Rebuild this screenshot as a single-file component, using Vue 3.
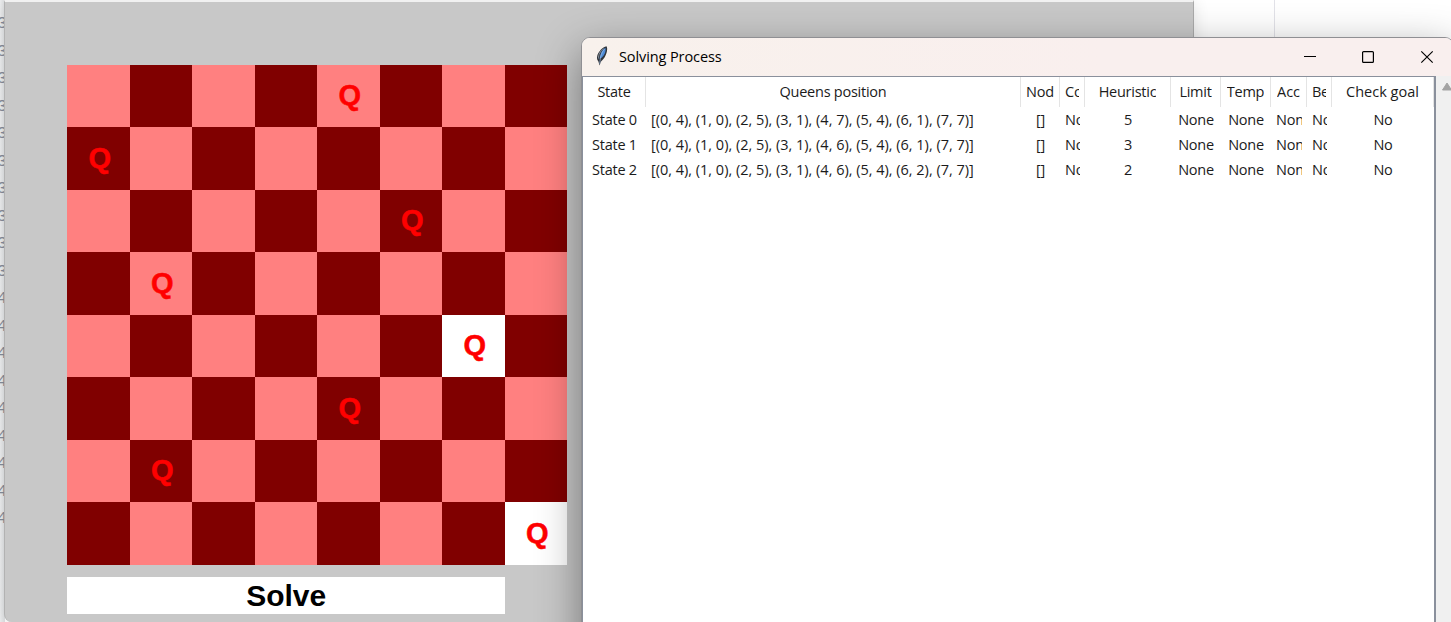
<script setup>
const queens = [4, 0, 5, 1, 6, 4, 1, 7]
const highlighted = ['4-6', '7-7']
const cells = []
for (let r = 0; r < 8; r++) {
  for (let c = 0; c < 8; c++) {
    cells.push({
      key: `${r}-${c}`,
      tone: highlighted.includes(`${r}-${c}`) ? 'white' : (r + c) % 2 ? 'dark' : 'light',
      queen: queens[r] === c,
    })
  }
}
const gutter = [3, 3, 3, 3, 3, 3, 3, 3, 3, 3, 4, 4, 4, 4, 4, 4, 4, 4, 4]
const headers = ['State', 'Queens position', 'Nod', 'Co', 'Heuristic', 'Limit', 'Temp', 'Acc', 'Be', 'Check goal']
const rows = [
  ['State 0', '[(0, 4), (1, 0), (2, 5), (3, 1), (4, 7), (5, 4), (6, 1), (7, 7)]', '[]', 'No', '5', 'None', 'None', 'None', 'No', 'No'],
  ['State 1', '[(0, 4), (1, 0), (2, 5), (3, 1), (4, 6), (5, 4), (6, 1), (7, 7)]', '[]', 'No', '3', 'None', 'None', 'None', 'No', 'No'],
  ['State 2', '[(0, 4), (1, 0), (2, 5), (3, 1), (4, 6), (5, 4), (6, 2), (7, 7)]', '[]', 'No', '2', 'None', 'None', 'None', 'No', 'No'],
]
</script>

<template>
  <div class="desktop">
    <div class="gutter"><span v-for="(n, i) in gutter" :key="i">{{ n }}</span></div>
    <div class="guide"></div>
    <section class="game">
      <div class="board">
        <div v-for="cell in cells" :key="cell.key" class="cell" :class="cell.tone">
          <span v-if="cell.queen">Q</span>
        </div>
      </div>
      <button class="solve"><span>Solve</span></button>
    </section>
    <section class="popup">
      <header class="titlebar">
        <svg class="feather" width="14" height="22" viewBox="0 0 14 22">
          <path d="M11.500 1.200C7.500 2 3.400 6.500 2.200 11c-.5 2.500 0 4 1.200 5.500L4.600 20.500l1.200-3.800C9 14 11 10.500 11.800 7c.5-2.300.6-4.500-.3-5.800Z" fill="#2f343b" />
          <path d="M10.500 2.800C7.500 4.500 5.200 8 4.600 14 8 12.500 10 9 10.600 5.800Z" fill="#4c8ad6" />
          <path d="M9.500 4C7 7 5.300 11 4.700 18.800" stroke="#a9c8ed" stroke-width=".6" fill="none" />
          <path d="M8.500 3.500C5.200 6 3.200 10 3.600 13.500" stroke="#8b949e" stroke-width="1" fill="none" />
        </svg>
        <h1>Solving Process</h1>
        <svg class="controls" width="132" height="14" viewBox="0 0 132 14">
          <path d="M1 6.500H13" stroke="#000" fill="none" />
          <rect x="59.600" y="1.600" width="10.800" height="10.800" rx="1" stroke="#000" stroke-width="1.200" fill="none" />
          <path d="M118.300 1.300 129.700 12.700M129.700 1.300 118.300 12.700" stroke="#000" stroke-width="1.150" fill="none" />
        </svg>
      </header>
      <div class="body">
        <div class="table">
          <div class="row head">
            <div v-for="h in headers" :key="h" class="td"><span class="clip">{{ h }}</span></div>
          </div>
          <div v-for="row in rows" :key="row[0]" class="row">
            <div v-for="(value, i) in row" :key="i" class="td" :class="{ positions: i === 1 }">
              <span class="clip">{{ value }}</span>
            </div>
          </div>
        </div>
        <div class="scroll">
          <svg width="12" height="9" viewBox="0 0 12 9"><path d="M6 1 10.500 8H1.500Z" fill="#a3a3a3" stroke="#a3a3a3" stroke-linejoin="round" /></svg>
        </div>
      </div>
    </section>
  </div>
</template>

<style>
html, body { overflow: hidden; }
</style>

<style scoped>
.desktop {
  position: relative;
  width: 1451px;
  height: 622px;
  overflow: hidden;
  background: #fff;
  font-family: "Open Sans", "Noto Sans", sans-serif;
}
.gutter {
  position: absolute;
  left: 0;
  top: 0;
  width: 5px;
  height: 622px;
  overflow: hidden;
  display: flex;
  flex-direction: column;
  background: linear-gradient(90deg, #eeeff0, #dddfe1);
  padding-top: 10px;
  box-sizing: border-box;
}
.gutter span {
  flex: 0 0 27.500px;
  line-height: 27.500px;
  margin-left: -3px;
  font-family: "Liberation Mono", monospace;
  font-size: 17px;
  color: #858b98;
}
.guide {
  position: absolute;
  left: 1274px;
  top: 0;
  width: 1px;
  height: 60px;
  background: #e2e2e8;
}
.game {
  position: absolute;
  left: 4px;
  top: 0;
  width: 1190px;
  height: 622px;
  box-sizing: border-box;
  border-left: 1px solid #b2b2b2;
  border-right: 1px solid #aaa;
  border-top: 2px solid #f1f1f1;
  border-bottom-left-radius: 8px;
  background: #c8c8c8;
  padding: 62.500px 0 0 62.500px;
  box-shadow: 0 2px 16px rgba(0, 0, 0, .12);
}
.board {
  display: grid;
  grid-template-columns: repeat(8, 62.500px);
  grid-auto-rows: 62.500px;
  width: 500px;
  margin-left: -.1px;
}
.cell {
  display: flex;
  align-items: center;
  justify-content: center;
  font: bold 29px "Liberation Sans", Arial, sans-serif;
  color: #f00;
}
.cell span {
  line-height: 30px;
  padding: 0 0 1px 2px;
  -webkit-text-stroke: .5px #f00;
}
.light { background: #ff8080; }
.dark { background: #800000; }
.white { background: #fff; }
.solve {
  display: flex;
  align-items: center;
  justify-content: center;
  width: 437.500px;
  height: 37.500px;
  margin: 12.400px 0 0 -.1px;
  padding: 0;
  border: 0;
  background: #fff;
  color: #000;
  font: bold 30px "Liberation Sans", Arial, sans-serif;
}
.popup {
  position: absolute;
  left: 581px;
  top: 37px;
  width: 873px;
  height: 640px;
  box-sizing: border-box;
  border: 1px solid #8f8f93;
  border-radius: 9px;
  overflow: hidden;
  background: #fff;
  box-shadow: 0 14px 44px rgba(0, 0, 0, .42);
}
.titlebar {
  height: 38px;
  display: flex;
  align-items: center;
  background: linear-gradient(90deg, #f8f1ec, #f9efee 60%);
}
.feather { margin: -2px 0 0 13px; }
h1 {
  margin: -1px 0 0 10px;
  font-size: 14.500px;
  font-weight: 400;
  letter-spacing: -.1px;
  color: #000;
}
.controls { margin: 0 18px 0 auto; }
.body { display: flex; height: 602px; }
.table {
  width: 854px;
  box-sizing: border-box;
  border: solid #8a909c;
  border-width: 1px 2px 0 1px;
  background: #fff;
}
.row {
  display: grid;
  grid-template-columns: 63px 375px 39px 25px 86px 50px 50px 36px 25px 102px;
  height: 25px;
}
.head { height: 30px; }
.td {
  box-sizing: border-box;
  padding: 0 5px 1px 5px;
  display: flex;
  align-items: center;
  min-width: 0;
  font-size: 14.500px;
  color: #1b1b1b;
  letter-spacing: -.25px;
}
.head .td { border-right: 1px solid #e4e4e4; }
.head .td:nth-child(8) { letter-spacing: -.1px; }
.head .td:last-child { letter-spacing: 0; }
.clip {
  max-width: 100%;
  margin: 0 auto;
  overflow: hidden;
  white-space: nowrap;
}
.positions { letter-spacing: -.01px; }
.positions .clip { margin: 0; }
.scroll {
  flex: 1;
  background: #f0f0f0;
  padding: 6px 0 0 5px;
}
.scroll svg { display: block; }
</style>
